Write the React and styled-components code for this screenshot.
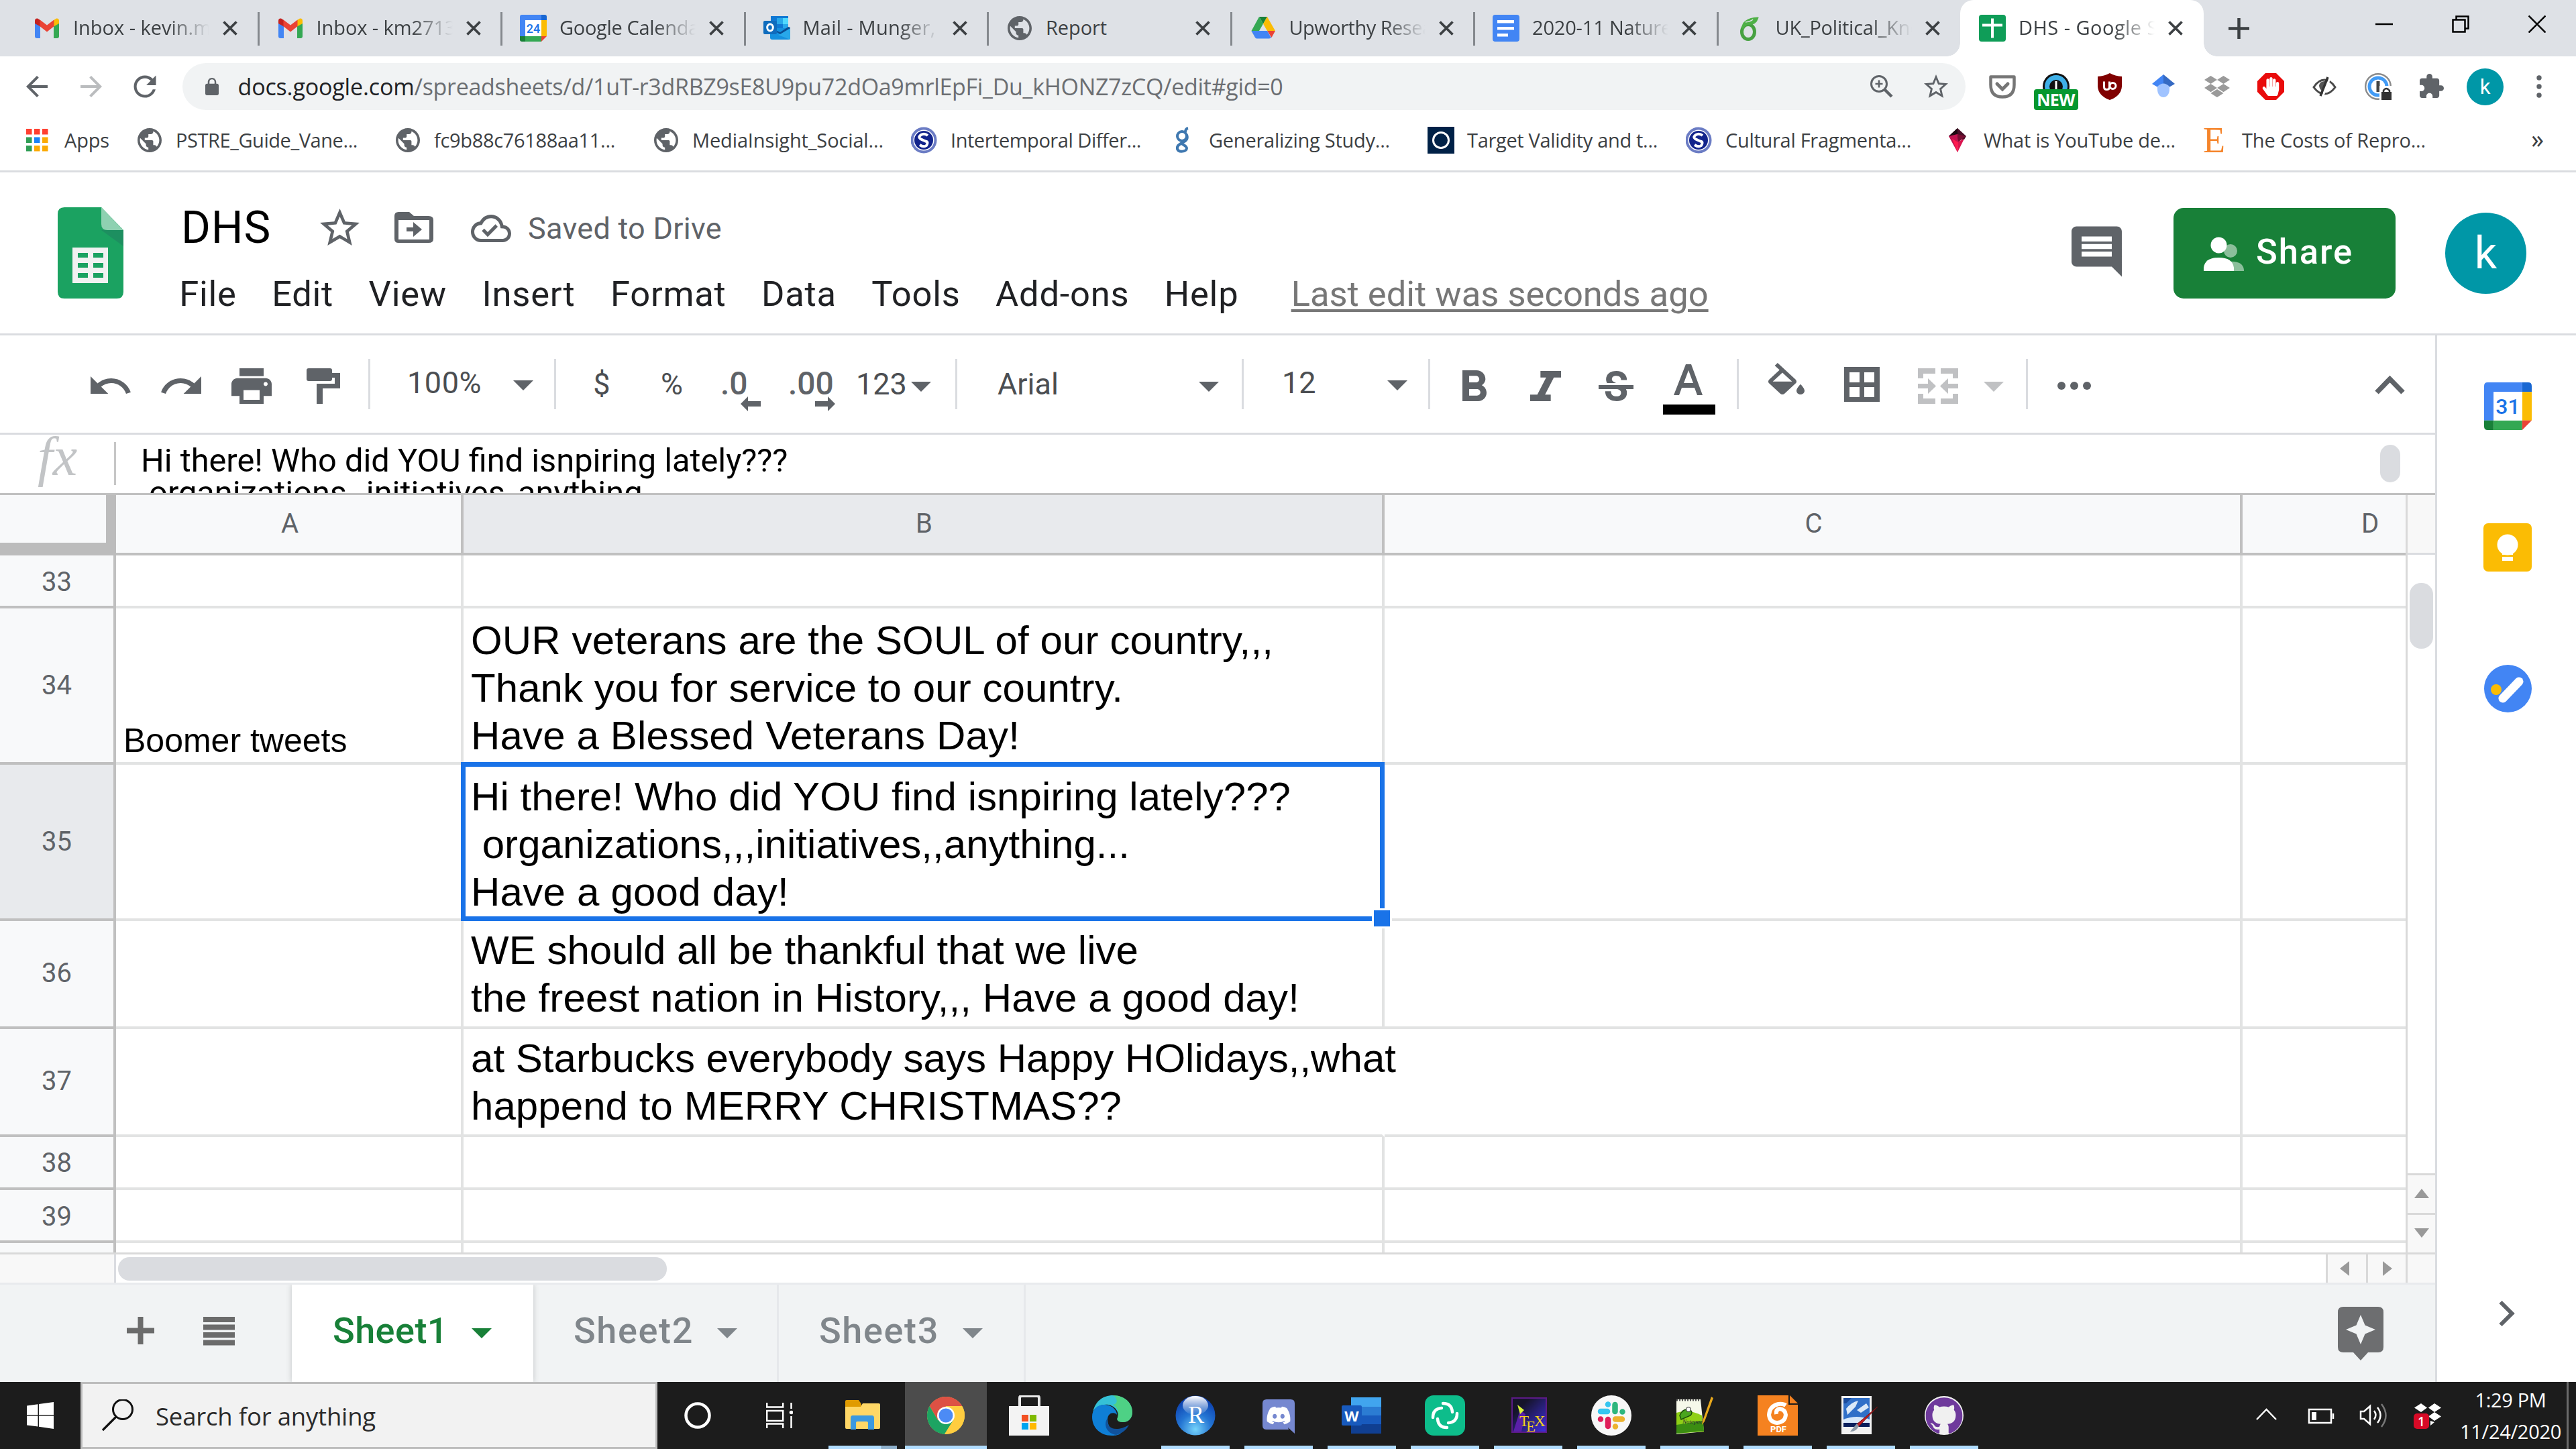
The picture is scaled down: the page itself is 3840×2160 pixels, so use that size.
import React, { useLayoutEffect, useRef, useState } from 'react';
import styled, { createGlobalStyle, css } from 'styled-components';
import { FaDiscord, FaDropbox, FaHandPaper } from 'react-icons/fa';
import { SiGithub } from 'react-icons/si';

const GlobalStyle = createGlobalStyle`
  *, *::before, *::after { box-sizing: border-box; }
  html, body { margin: 0; padding: 0; background: #fff; }
  svg { display: block; flex: none; }
`;

const UI = '"Open Sans", "Noto Sans", sans-serif';
const ROBOTO = 'Roboto, "Liberation Sans", sans-serif';
const ARIAL = '"Liberation Sans", Arial, sans-serif';
const GRAY = '#5f6368';

/* ---------- shared pieces ---------- */

const Span = styled.span`
  display: inline-block;
  flex: none;
  white-space: pre;
`;

/* Text tracked so that it fills the given width. */
function Fit({ width, children, className }) {
  const ref = useRef(null);
  const [spacing, setSpacing] = useState(null);
  useLayoutEffect(() => {
    if (spacing === null && ref.current) {
      const natural = ref.current.getBoundingClientRect().width;
      setSpacing((width - natural) / String(children).length);
    }
  }, [spacing, width, children]);
  return (
    <Span ref={ref} className={className} style={spacing === null ? undefined : { letterSpacing: `${spacing}px` }}>
      {children}
    </Span>
  );
}

/* A drawing whose box is "x y width height"; one unit is one pixel. */
function Pic({ box, children, ...rest }) {
  const [, , w, h] = box.split(' ');
  return (
    <svg width={w} height={h} viewBox={box} {...rest}>
      {children}
    </svg>
  );
}

/* Stretches path d with bounds `from` [x0,y0,x1,y1] into bounds `to`. */
function Shape({ d, from, to, fill = GRAY, ...rest }) {
  const sx = (to[2] - to[0]) / (from[2] - from[0]);
  const sy = (to[3] - to[1]) / (from[3] - from[1]);
  return (
    <path
      d={d}
      fill={fill}
      fillRule="evenodd"
      transform={`translate(${to[0] - from[0] * sx} ${to[1] - from[1] * sy}) scale(${sx} ${sy})`}
      {...rest}
    />
  );
}

const P = {
  undo: 'M12.5 8c-2.65 0-5.05.99-6.9 2.6L2 7v9h9l-3.62-3.62c1.39-1.16 3.16-1.88 5.12-1.88 3.54 0 6.55 2.31 7.6 5.5l2.37-.78C21.08 11.03 17.15 8 12.5 8z',
  redo: 'M18.4 10.6C16.55 8.99 14.15 8 11.5 8c-4.65 0-8.58 3.03-9.96 7.22L3.9 16c1.05-3.19 4.05-5.5 7.6-5.5 1.95 0 3.73.72 5.12 1.88L13 16h9V7l-3.6 3.6z',
  print: 'M19 8H5c-1.66 0-3 1.34-3 3v6h4v4h12v-4h4v-6c0-1.66-1.34-3-3-3zm-3 11H8v-5h8v5zm3-7c-.55 0-1-.45-1-1s.45-1 1-1 1 .45 1 1-.45 1-1 1zm-1-9H6v4h12V3z',
  star: 'M22 9.24l-7.19-.62L12 2 9.19 8.63 2 9.24l5.46 4.73L5.82 21 12 17.27 18.18 21l-1.63-7.03L22 9.24zM12 15.4l-3.76 2.27 1-4.28-3.32-2.88 4.38-.38L12 6.1l1.71 4.04 4.38.38-3.32 2.88 1 4.28L12 15.4z',
  cloud: 'M19.35 10.04C18.67 6.59 15.64 4 12 4 9.11 4 6.6 5.64 5.35 8.04 2.34 8.36 0 10.91 0 14c0 3.31 2.69 6 6 6h13c2.76 0 5-2.24 5-5 0-2.64-2.05-4.78-4.65-4.96zM19 18H6c-2.21 0-4-1.79-4-4 0-2.05 1.53-3.76 3.56-3.97l1.07-.11.5-.95C8.08 7.14 9.94 6 12 6c2.62 0 4.88 1.86 5.39 4.43l.3 1.5 1.53.11c1.56.1 2.78 1.41 2.78 2.96 0 1.65-1.35 3-3 3zm-9-3.82l-2.09-2.09L6.5 13.5 10 17l6.01-6.01-1.41-1.41z',
  comment: 'M21.99 4c0-1.1-.89-2-1.99-2H4c-1.1 0-2 .9-2 2v12c0 1.1.9 2 2 2h14l4 4-.01-18zM18 14H6v-2h12v2zm0-3H6V9h12v2zm0-3H6V6h12v2z',
  bold: 'M15.6 10.79c.97-.67 1.65-1.77 1.65-2.79 0-2.26-1.75-4-4-4H7v14h7.04c2.09 0 3.71-1.7 3.71-3.79 0-1.52-.86-2.82-2.15-3.42zM10 6.5h3c.83 0 1.5.67 1.5 1.5s-.67 1.5-1.5 1.5h-3v-3zm3.5 9H10v-3h3.5c.83 0 1.5.67 1.5 1.5s-.67 1.5-1.5 1.5z',
  italic: 'M10 4v3h2.21l-3.42 8H6v3h8v-3h-2.21l3.42-8H18V4z',
  strike: 'M7.24 8.75c-.26-.48-.39-1.03-.39-1.67 0-.61.13-1.16.4-1.67.26-.5.63-.93 1.11-1.29.48-.35 1.05-.63 1.7-.83.66-.19 1.39-.29 2.18-.29.81 0 1.54.11 2.21.34.66.22 1.23.54 1.69.94.47.4.83.88 1.08 1.43s.38 1.15.38 1.81h-3.01c0-.31-.05-.59-.15-.85-.09-.27-.24-.49-.44-.68-.2-.19-.45-.33-.75-.44-.3-.1-.66-.16-1.06-.16-.39 0-.74.04-1.03.13s-.53.21-.72.36c-.19.16-.34.34-.44.55-.1.21-.15.43-.15.66 0 .48.25.88.74 1.21.38.25.77.48 1.41.7H7.39c-.05-.08-.11-.17-.15-.25zM21 12v-2H3v2h9.62c.18.07.4.14.55.2.37.17.66.34.87.51s.35.36.43.57c.07.2.11.43.11.69 0 .23-.05.45-.14.66-.09.2-.23.38-.42.53-.19.15-.42.26-.71.35-.29.08-.63.13-1.01.13-.43 0-.83-.04-1.18-.13s-.66-.23-.91-.42c-.25-.19-.45-.44-.59-.75s-.25-.76-.25-1.21H6.4c0 .55.08 1.13.24 1.58s.37.85.65 1.21c.28.35.6.66.98.92.37.26.78.48 1.22.65.44.17.9.3 1.38.39.48.08.96.13 1.44.13.8 0 1.53-.09 2.18-.28s1.21-.45 1.67-.79c.46-.34.82-.77 1.07-1.27s.38-1.07.38-1.71c0-.6-.1-1.14-.31-1.61-.05-.11-.11-.23-.17-.33H21z',
  fill: 'M16.56 8.94L7.62 0 6.21 1.41l2.38 2.38-5.15 5.15c-.59.59-.59 1.54 0 2.12l5.5 5.5c.29.29.68.44 1.06.44s.77-.15 1.06-.44l5.5-5.5c.59-.58.59-1.53 0-2.12zM5.21 10L10 5.21 14.79 10H5.21zM19 11.5s-2 2.17-2 3.5c0 1.1.9 2 2 2s2-.9 2-2c0-1.33-2-3.5-2-3.5z',
  puzzle: 'M20.5 11H19V7c0-1.1-.9-2-2-2h-4V3.5C13 2.12 11.88 1 10.5 1S8 2.12 8 3.5V5H4c-1.1 0-1.99.9-1.99 2v3.8H3.5c1.49 0 2.7 1.21 2.7 2.7s-1.21 2.7-2.7 2.7H2V20c0 1.1.9 2 2 2h3.8v-1.5c0-1.49 1.21-2.7 2.7-2.7 1.49 0 2.7 1.21 2.7 2.7V22H17c1.1 0 2-.9 2-2v-4h1.5c1.38 0 2.5-1.12 2.5-2.5S21.88 11 20.5 11z',
  lock: 'M18 8h-1V6c0-2.76-2.24-5-5-5S7 3.24 7 6v2H6c-1.1 0-2 .9-2 2v10c0 1.1.9 2 2 2h12c1.1 0 2-.9 2-2V10c0-1.1-.9-2-2-2zM15 8H9V6c0-1.71 1.29-3.1 3-3.1s3.1 1.39 3.1 3.1z',
  reload: 'M17.65 6.35C16.2 4.9 14.21 4 12 4c-4.42 0-7.99 3.58-7.99 8s3.57 8 7.99 8c3.73 0 6.84-2.55 7.73-6h-2.08c-.82 2.33-3.04 4-5.65 4-3.31 0-6-2.69-6-6s2.69-6 6-6c1.66 0 3.14.69 4.22 1.78L13 11h7V4l-2.35 2.35z',
  back: 'M20 11H7.83l5.59-5.59L12 4l-8 8 8 8 1.41-1.41L7.83 13H20v-2z',
  forward: 'M4 11h12.17l-5.59-5.59L12 4l8 8-8 8-1.41-1.41L16.17 13H4v-2z',
  globe: 'M12 2C6.48 2 2 6.48 2 12s4.48 10 10 10 10-4.48 10-10S17.52 2 12 2zm-1 17.93c-3.95-.49-7-3.85-7-7.93 0-.62.08-1.21.21-1.79L9 15v1c0 1.1.9 2 2 2v1.93zm6.9-2.54c-.26-.81-1-1.39-1.9-1.39h-1v-3c0-.55-.45-1-1-1H8v-2h2c.55 0 1-.45 1-1V7h2c1.1 0 2-.9 2-2v-.41c2.93 1.19 5 4.06 5 7.41 0 2.08-.8 3.97-2.1 5.39z',
};

const SQ = [2, 2, 22, 22];

/* ---------- favicons (40 x 40) ---------- */

const Fav = ({ children }) => <Pic box="0 0 40 40">{children}</Pic>;

const Gmail = () => (
  <Fav>
    <path d="M2 10v22q0 3 3 3h5V17z" fill="#4285f4" />
    <path d="M38 10v22q0 3-3 3h-5V17z" fill="#34a853" />
    <path d="M2 9q0-4 4-3.500l4 2.500v9.500L2 13z" fill="#c5221f" />
    <path d="M38 9q0-4-4-3.500l-4 2.500v9.500l8-4.500z" fill="#fbbc04" />
    <path d="M9.500 7.500L20 15.500l10.500-8v9.800L20 25.500 9.500 17.300z" fill="#ea4335" />
  </Fav>
);

const Calendar = ({ day, size = 40 }) => (
  <svg width={size} height={size} viewBox="0 0 40 40">
    <path d="M3 0h29v8H8v24H0V3q0-3 3-3z" fill="#4285f4" />
    <path d="M32 0h5q3 0 3 3v5h-8z" fill="#1967d2" />
    <path d="M32 8h8v24h-8z" fill="#fbbc04" />
    <path d="M0 32h8v8H3q-3 0-3-3z" fill="#188038" />
    <path d="M8 32h24v8H8z" fill="#34a853" />
    <path d="M32 32h8l-8 8z" fill="#ea4335" />
    <path d="M8 8h24v24H8z" fill="#fff" />
    <text x="20" y="26.500" fontFamily="Roboto, sans-serif" fontSize="18" fontWeight="500" fill="#1a73e8" textAnchor="middle">
      {day}
    </text>
  </svg>
);

const Outlook = () => (
  <Fav>
    <path d="M11 2h26v24H11z" fill="#0f78d4" />
    <path d="M20 5h9v9h-9z" fill="#28a8ea" />
    <path d="M29 5h8v9h-8z" fill="#50d9ff" />
    <path d="M29 14h8v8h-8z" fill="#28a8ea" />
    <path d="M10 20l30 0v14q0 3-3 3H13q-3 0-3-3z" fill="#1490df" />
    <path d="M40 20L22 30l18 7z" fill="#28a8ea" />
    <path d="M10 20l15 9 15-9v-1l-3-1-12 8z" fill="#0a4e94" />
    <rect x="0" y="9" width="20" height="20" rx="2" fill="#0f6cbd" />
    <ellipse cx="10" cy="19" rx="4.300" ry="5" fill="none" stroke="#fff" strokeWidth="3" />
  </Fav>
);

const Globe = () => (
  <Fav>
    <Shape d={P.globe} from={SQ} to={[2, 2, 38, 38]} />
  </Fav>
);

const Drive = () => (
  <Fav>
    <path d="M14 3h12l-6 10.500z" fill="#188038" />
    <path d="M14 3l6 10.500L8.500 33.500 2.500 24z" fill="#34a853" />
    <path d="M26 3l12 21H26L20 13.500z" fill="#fbbc04" />
    <path d="M38 24l-5.500 10L26 24z" fill="#ea4335" />
    <path d="M2.500 24H26l6 10.500-3 1H11q-2 0-3-1.500z" fill="#4285f4" />
  </Fav>
);

const Docs = () => (
  <Fav>
    <rect width="40" height="40" rx="4" fill="#4285f4" />
    <path d="M7 8h25v4.500H7zM7 18h25v4.500H7zM7 28h16v4.500H7z" fill="#fff" />
  </Fav>
);

const Overleaf = () => (
  <Fav>
    <ellipse cx="18" cy="25.500" rx="9.500" ry="11" fill="none" stroke="#47a141" strokeWidth="5" />
    <path d="M8 20Q9 5 32 3.500q2.500 0 1 2Q30 16 17 15q-5 2-6 7z" fill="#4fb047" />
    <path d="M14 11q8-1 11-4" stroke="#dee1e6" strokeWidth="1.500" fill="none" />
  </Fav>
);

const SheetsFav = () => (
  <Fav>
    <rect width="40" height="40" rx="4" fill="#0f9d58" />
    <path d="M18 5.500h4v8h13v4H22v17h-4v-17H5v-4h13z" fill="#fff" />
  </Fav>
);

const SSeal = () => (
  <Fav>
    <circle cx="19" cy="20" r="17.500" fill="#fff" stroke="#6b7cc4" strokeWidth="4" />
    <circle cx="19" cy="20" r="14" fill="#12248c" />
    <path d="M25 13q-5-4-10-1t-1 6q6 3 9 4t0 6q-4 3-10-1" fill="none" stroke="#fff" strokeWidth="4" />
  </Fav>
);

const GLogo = () => (
  <Fav>
    <circle cx="19" cy="14" r="7" fill="none" stroke="#3f78b0" strokeWidth="4" />
    <path d="M24 8q0-5 4-6" fill="none" stroke="#3f78b0" strokeWidth="4" />
    <path d="M26 12q3 8-6 11c-7 2 6 4 6 9s-12 7-14 1q-1-6 8-9" fill="none" stroke="#3f78b0" strokeWidth="4" />
  </Fav>
);

const Oxford = () => (
  <Fav>
    <rect width="40" height="40" fill="#002147" />
    <circle cx="20" cy="20" r="11.500" fill="none" stroke="#fff" strokeWidth="3" />
  </Fav>
);

const Kite = () => (
  <Fav>
    <path d="M20 2L7 14l5 6 18-1 3-5z" fill="#4a0f28" />
    <path d="M20 2l-13 12 13-3z" fill="#1d0a12" />
    <path d="M7 14l13-3 1 10-1 17z" fill="#c1124f" />
    <path d="M20 11l12 3-11 9z" fill="#7a0d32" />
    <path d="M12 18l9 5-1 15z" fill="#ff1a4f" />
    <path d="M21 22l9-4-10 20z" fill="#d9154f" />
  </Fav>
);

const EText = styled.span`
  width: 40px;
  flex: none;
  font: 54px/40px "Liberation Serif", serif;
  text-align: left;
  padding-left: 1px;
  color: #f5842a;
`;

/* ---------- browser tab strip ---------- */

const Screen = styled.div`
  width: 3840px;
  height: 2160px;
  display: flex;
  flex-direction: column;
  background: #fff;
  overflow: hidden;
`;

const TabStrip = styled.div`
  display: flex;
  height: 84px;
  flex: none;
  padding-left: 22px;
  background: #dee1e6;
`;

const BrowserTab = styled.div`
  position: relative;
  display: flex;
  align-items: center;
  width: 362.5px;
  flex: none;
  padding-left: 28px;
  ${(p) =>
    p.$active &&
    css`
      background: #fff;
      border-radius: 20px 20px 0 0;
      &::before,
      &::after {
        content: '';
        position: absolute;
        bottom: 0;
        width: 20px;
        height: 20px;
      }
      &::before {
        left: -20px;
        background: radial-gradient(circle at 0 0, transparent 19.5px, #fff 20px);
      }
      &::after {
        right: -20px;
        background: radial-gradient(circle at 100% 0, transparent 19.5px, #fff 20px);
      }
    `}
`;

const TabTitle = styled.div`
  width: 203px;
  height: 84px;
  margin: 0 19px 0 19px;
  overflow: hidden;
  font: 29px/82px ${UI};
  color: #3c4043;
  white-space: nowrap;
  ${(p) => p.$fade && 'mask-image: linear-gradient(90deg, #000 70%, transparent 100%);'}
`;

const TabRule = styled.div`
  width: 3px;
  height: 50px;
  margin: 2px -2px 0 auto;
  background: #84888d;
`;

const WindowButtons = styled.div`
  display: flex;
  align-items: center;
  margin-left: auto;
  padding: 0 45px 13px 0;
  gap: 88px;
`;

const NewTab = styled.div`
  display: flex;
  align-items: center;
  margin-left: 37px;
`;

const CloseX = () => (
  <Pic box="0 0 24 24">
    <path d="M2.500 2.500l19 19M21.500 2.500l-19 19" stroke="#3c4043" strokeWidth="3.800" />
  </Pic>
);

const TABS = [
  { icon: <Gmail />, text: 'Inbox - kevin.m', w: 206, fade: true },
  { icon: <Gmail />, text: 'Inbox - km2713', w: 208, fade: true },
  { icon: <Calendar day="24" />, text: 'Google Calenda', w: 208, fade: true },
  { icon: <Outlook />, text: 'Mail - Munger,', w: 198, fade: true },
  { icon: <Globe />, text: 'Report', w: 91 },
  { icon: <Drive />, text: 'Upworthy Resea', w: 214, fade: true },
  { icon: <Docs />, text: '2020-11 Nature', w: 208, fade: true },
  { icon: <Overleaf />, text: 'UK_Political_Kno', w: 218, fade: true, last: true },
  { icon: <SheetsFav />, text: 'DHS - Google S', w: 208, fade: true, active: true },
];

/* ---------- address bar ---------- */

const NavBar = styled.div`
  display: flex;
  align-items: center;
  height: 90px;
  flex: none;
  padding: 0 15px;
`;

const NavSlot = styled.div`
  display: flex;
  position: relative;
  align-items: center;
  justify-content: center;
  width: 80.5px;
  flex: none;
`;

const ExtSlot = styled(NavSlot)`
  width: 80px;
`;

const UrlPill = styled.div`
  display: flex;
  align-items: center;
  width: 2658px;
  height: 70px;
  margin: 0 15px;
  padding: 0 25px 0 33px;
  border-radius: 35px;
  background: #f1f3f4;
  font: 34px/70px ${UI};
  color: #6b6e72;
`;

const UrlHost = styled.span`
  display: inline-flex;
  margin-left: 28px;
  color: #202124;
`;

const PillIcons = styled.div`
  display: flex;
  align-items: center;
  gap: 45px;
  margin-left: auto;
`;

const NewBadge = styled.div`
  position: absolute;
  left: 7px;
  top: 24px;
  width: 66px;
  height: 31px;
  border-radius: 4px;
  background: #06972f;
  color: #fff;
  font: 700 25px/31px ${UI};
  letter-spacing: -0.6px;
  text-align: center;
`;

const Avatar = styled.div`
  display: flex;
  align-items: center;
  justify-content: center;
  width: ${(p) => p.$size}px;
  height: ${(p) => p.$size}px;
  flex: none;
  border-radius: 50%;
  background: #0097a7;
  color: #fff;
  font: ${(p) => p.$font}px/1 ${ROBOTO};
`;

const AddressBar = () => (
  <NavBar>
    <NavSlot>
      <Pic box="0 0 34 34"><Shape d={P.back} from={[4, 4, 20, 20]} to={[1, 1, 33, 33]} /></Pic>
    </NavSlot>
    <NavSlot>
      <Pic box="0 0 34 34"><Shape d={P.forward} from={[4, 4, 20, 20]} to={[1, 1, 33, 33]} fill="#babcbe" /></Pic>
    </NavSlot>
    <NavSlot>
      <Pic box="0 0 34 34"><Shape d={P.reload} from={[4, 4, 20, 20]} to={[0.5, 0.5, 33.5, 33.5]} /></Pic>
    </NavSlot>
    <UrlPill>
      <Pic box="0 0 22 28"><Shape d={P.lock} from={[4, 1, 20, 22]} to={[1, 1, 21, 27]} /></Pic>
      <UrlHost><Fit width={263}>docs.google.com</Fit></UrlHost>
      <Fit width={1295}>/spreadsheets/d/1uT-r3dRBZ9sE8U9pu72dOa9mrlEpFi_Du_kHONZ7zCQ/edit#gid=0</Fit>
      <PillIcons>
        <Pic box="0 0 34 34">
          <circle cx="13" cy="13" r="11.500" fill="none" stroke={GRAY} strokeWidth="3" />
          <path d="M21 21l11 11" stroke={GRAY} strokeWidth="4.500" />
          <path d="M13 7.500v11M7.500 13h11" stroke={GRAY} strokeWidth="2.600" />
        </Pic>
        <Pic box="0 0 38 38"><Shape d={P.star} from={[2, 2, 22, 21]} to={[1, 1, 37, 36]} /></Pic>
      </PillIcons>
    </UrlPill>
    <ExtSlot>
      <Pic box="0 0 40 38">
        <path d="M2.500 4.500h35v12q0 18-17.500 18T2.500 16.500z" fill="none" stroke="#767676" strokeWidth="4.500" strokeLinejoin="round" />
        <path d="M12 15l8 8 8-8" fill="none" stroke="#767676" strokeWidth="5" strokeLinecap="round" />
      </Pic>
    </ExtSlot>
    <ExtSlot>
      <Pic box="0 0 40 40">
        <circle cx="20" cy="20" r="20" fill="#111" />
        <circle cx="20" cy="20" r="13.500" fill="none" stroke="#3fb0e8" strokeWidth="7" />
        <path d="M20 12v12" stroke="#fff" strokeWidth="3" />
      </Pic>
      <NewBadge>NEW</NewBadge>
    </ExtSlot>
    <ExtSlot>
      <Pic box="0 0 36 40">
        <path d="M18 0q8 4.500 18 5v15Q35 34 18 40 1 34 0 20V5q10-.5 18-5z" fill="#800000" />
        <path d="M9.500 12.500v8q0 4 4 4t4-4v-8" fill="none" stroke="#fff" strokeWidth="3" />
        <circle cx="22.500" cy="19" r="4.500" fill="none" stroke="#fff" strokeWidth="3" />
      </Pic>
    </ExtSlot>
    <ExtSlot>
      <Pic box="0 0 34 38">
        <path d="M17 1v24L0 15z" fill="#4285f4" />
        <path d="M17 1v24l17-10z" fill="#356ac3" />
        <path d="M8 19q9-9 18 0v4c0 16-18 16-18 0z" fill="#a0c3ff" />
      </Pic>
    </ExtSlot>
    <ExtSlot><FaDropbox size={38} color="#9a9a9a" /></ExtSlot>
    <ExtSlot>
      <Pic box="0 0 40 40">
        <path d="M12 0h16l12 12v16L28 40H12L0 28V12z" fill="#e90c0c" />
        <FaHandPaper size={28} x="6" y="6" color="#fff" />
      </Pic>
    </ExtSlot>
    <ExtSlot>
      <Pic box="0 0 36 30">
        <path d="M2 16Q9 5 18 5t16 11Q27 26 18 26T2 16z" fill="none" stroke="#4a4a4a" strokeWidth="3" />
        <path d="M10 13Q12 6 20 7l-6 14q-4-3-4-8z" fill="#555" />
        <path d="M26.500 1.500L15.500 29.500" stroke="#fff" strokeWidth="3" />
        <path d="M23 1L12 29" stroke="#333" strokeWidth="3.500" />
      </Pic>
    </ExtSlot>
    <ExtSlot>
      <Pic box="0 0 40 40">
        <circle cx="20" cy="20" r="18.800" fill="none" stroke="#8a8a8a" strokeWidth="2.400" />
        <circle cx="20" cy="20" r="13" fill="none" stroke="#429bf5" strokeWidth="5" />
        <path d="M17.500 12h5v16h-5z" fill="#444" />
        <path d="M22 19h18v21H22z" fill="#fff" />
        <path d="M25 28h15v12H25z" fill="#333" />
        <path d="M28 29v-3q4-6 9 0v3" fill="none" stroke="#333" strokeWidth="2.500" />
      </Pic>
    </ExtSlot>
    <ExtSlot><Pic box="0 0 38 38"><Shape d={P.puzzle} from={[2, 1, 23, 22]} to={[1, 0, 37, 36]} /></Pic></ExtSlot>
    <ExtSlot><Avatar $size={55} $font={31}>k</Avatar></ExtSlot>
    <ExtSlot>
      <Pic box="0 0 10 36">
        <circle cx="5" cy="5" r="3.700" fill={GRAY} />
        <circle cx="5" cy="18" r="3.700" fill={GRAY} />
        <circle cx="5" cy="31" r="3.700" fill={GRAY} />
      </Pic>
    </ExtSlot>
  </NavBar>
);

/* ---------- bookmarks ---------- */

const BookmarkBar = styled.div`
  display: flex;
  align-items: center;
  height: 83px;
  flex: none;
  padding: 0 0 10px 39px;
  border-bottom: 3px solid #dadce0;
  font: 29px/70px ${UI};
  color: #3c4043;
`;

const AppsLink = styled.div`
  display: flex;
  align-items: center;
  gap: 24px;
  width: 164px;
  flex: none;
`;

const Bookmark = styled.div`
  display: flex;
  align-items: center;
  gap: 19px;
  width: 385px;
  flex: none;
`;

const More = styled.div`
  margin-left: auto;
  padding: 0 48px 6px 0;
  font-size: 38px;
`;

const BOOKMARKS = [
  { icon: <Globe />, text: 'PSTRE_Guide_Vane...', w: 271 },
  { icon: <Globe />, text: 'fc9b88c76188aa11...', w: 270 },
  { icon: <Globe />, text: 'MediaInsight_Social...', w: 285 },
  { icon: <SSeal />, text: 'Intertemporal Differ...', w: 284 },
  { icon: <GLogo />, text: 'Generalizing Study...', w: 270 },
  { icon: <Oxford />, text: 'Target Validity and t...', w: 284 },
  { icon: <SSeal />, text: 'Cultural Fragmenta...', w: 277 },
  { icon: <Kite />, text: 'What is YouTube de...', w: 286 },
  { icon: <EText>E</EText>, text: 'The Costs of Repro...', w: 274 },
];

const APP_COLORS = ['#ff4031', '#ff4031', '#ff4031', '#2f9e55', '#1a82f7', '#fbaa05', '#2f9e55', '#fbaa05', '#fbaa05'];

/* ---------- document header ---------- */

const DocHeader = styled.div`
  display: flex;
  height: 243px;
  flex: none;
  padding: 43px 74px 0 86px;
  border-bottom: 3px solid #dadce0;
  font-family: ${ROBOTO};
`;

const LogoBox = styled.div`
  width: 155px;
  padding-top: 9px;
  flex: none;
`;

const TitleRow = styled.div`
  display: flex;
  align-items: center;
  height: 80px;
  padding-left: 29px;
`;

const DocName = styled.div`
  width: 204px;
  padding-bottom: 3px;
  font-size: 67px;
  line-height: 76px;
  color: #000;
`;

const SavedNote = styled.div`
  margin-left: 25px;
  font-size: 45px;
  color: ${GRAY};
`;

const MenuRow = styled.div`
  display: flex;
  align-items: center;
  height: 66px;
  margin-top: 25px;
  font-size: 52.5px;
  letter-spacing: 0.75px;
  color: #202124;
`;

const MenuItem = styled.div`
  padding: 0 26.25px;
`;

const LastEdit = styled.div`
  margin-left: 52px;
  color: #777;
  letter-spacing: 0;
  & > span {
    text-decoration: underline;
    text-decoration-thickness: 4px;
    text-underline-offset: 5px;
  }
`;

const HeaderActions = styled.div`
  display: flex;
  align-items: center;
  height: 155px;
  margin-left: auto;
`;

const ShareButton = styled.div`
  display: flex;
  align-items: center;
  width: 331px;
  height: 135px;
  margin: 0 74px 0 76px;
  padding-left: 45px;
  gap: 18px;
  border-radius: 15px;
  background: #188038;
  color: #fff;
  font: 500 52.5px/131px ${ROBOTO};
  & > span { height: 135px; }
`;

const Header = () => (
  <DocHeader>
    <LogoBox>
      <Pic box="0 0 98 136">
        <path d="M10 0h55l33 34v92q0 10-10 10H10q-10 0-10-10V10Q0 0 10 0z" fill="#1ba261" />
        <path d="M65 34h33v24z" fill="#1d8f60" />
        <path d="M65 0l33 34H74q-9 0-9-9z" fill="#8ed1b1" />
        <path fillRule="evenodd" fill="#f1f1f1" d="M22 60h53v53H22zM30 68v7h15v-7zM53 68v7h15v-7zM30 83v7h15v-7zM53 83v7h15v-7zM30 98v7h15v-7zM53 98v7h15v-7z" />
      </Pic>
    </LogoBox>
    <div>
      <TitleRow>
        <DocName><Fit width={134}>DHS</Fit></DocName>
        <Pic box="474 302 288 76">
          <Shape d={P.star} from={[2, 2, 22, 21]} to={[477, 311, 536, 366]} />
          <path fillRule="evenodd" fill={GRAY} d="M594 316h16l7 6h22q7 0 7 6v28q0 6-7 6h-45q-6 0-6-6v-34q0-6 6-6zM594 328v29h46v-29z" />
          <path d="M606 339h10v-8l13 11-13 11v-8h-10z" fill={GRAY} />
          <Shape d={P.cloud} from={[0, 4, 24, 20]} to={[702, 320, 762, 361]} />
        </Pic>
        <SavedNote><Fit width={289}>Saved to Drive</Fit></SavedNote>
      </TitleRow>
      <MenuRow>
        {['File', 'Edit', 'View', 'Insert', 'Format', 'Data', 'Tools', 'Add-ons', 'Help'].map((m) => (
          <MenuItem key={m}>{m}</MenuItem>
        ))}
        <LastEdit><Fit width={622}>Last edit was seconds ago</Fit></LastEdit>
      </MenuRow>
    </div>
    <HeaderActions>
      <Pic box="0 0 76 82"><Shape d={P.comment} from={SQ} to={[0, 0.5, 75, 75.5]} /></Pic>
      <ShareButton>
        <Pic box="0 0 60 56">
          <circle cx="40" cy="24" r="10" fill="#8bbf9b" />
          <path d="M36 40q24-2 24 14H44z" fill="#8bbf9b" />
          <circle cx="22.500" cy="15.500" r="12" fill="#fff" />
          <path d="M0 54v-5q2-15 22.500-15T45 49v5z" fill="#fff" />
        </Pic>
        <Fit width={145}>Share</Fit>
      </ShareButton>
      <Avatar $size={121} $font={66}>k</Avatar>
    </HeaderActions>
  </DocHeader>
);

/* ---------- toolbar ---------- */

const Work = styled.div`
  display: flex;
  flex: none;
  height: 1560px;
`;

const Main = styled.div`
  display: flex;
  flex-direction: column;
  width: 3633px;
  flex: none;
  border-right: 3px solid #dadce0;
`;

const Toolbar = styled.div`
  display: flex;
  align-items: center;
  height: 148px;
  flex: none;
  padding-left: 112px;
  border-bottom: 3px solid #dadce0;
  font: 45px/90px ${ROBOTO};
  color: #4b4e52;
`;

const Tool = styled.div`
  display: flex;
  align-items: center;
  justify-content: ${(p) => (p.$pad ? 'flex-start' : 'center')};
  width: ${(p) => p.$w}px;
  flex: none;
  padding-left: ${(p) => p.$pad || 0}px;
  margin-top: ${(p) => p.$dy || 0}px;
`;

const Rule = styled.div`
  display: flex;
  justify-content: center;
  width: ${(p) => p.$w}px;
  flex: none;
  &::after {
    content: '';
    width: 3px;
    height: 75px;
    background: #dadce0;
  }
`;

const Collapse = styled.div`
  display: flex;
  justify-content: center;
  width: 136px;
  margin-left: auto;
`;

const Caret = ({ color = GRAY, dy = 0 }) => (
  <Pic box="0 0 30 60">
    <path d={`M0 ${25 + dy}h30l-15 15z`} fill={color} />
  </Pic>
);

const Tools = () => (
  <Toolbar>
    <Tool $w={106}><Pic box="135 530 60 85"><Shape d={P.undo} from={[2, 7, 22.5, 16]} to={[135, 561, 195, 587]} /></Pic></Tool>
    <Tool $w={104}><Pic box="240 530 60 85"><Shape d={P.redo} from={[1.5, 7, 22, 16]} to={[240, 561, 300, 587]} /></Pic></Tool>
    <Tool $w={106}><Pic box="345 530 60 85"><Shape d={P.print} from={[2, 3, 22, 21]} to={[345, 549, 405, 602]} /></Pic></Tool>
    <Tool $w={108}>
      <Pic box="457 530 50 85">
        <rect x="457" y="549" width="38" height="19" rx="3" fill={GRAY} />
        <path d="M494 556h13v23h-26v23h-9v-30h27v-9h-5z" fill={GRAY} />
      </Pic>
    </Tool>
    <Rule $w={28} />
    <Tool $w={197} $pad={43} $dy={-3}><Fit width={111}>100%</Fit></Tool>
    <Tool $w={38}><Caret dy={-1} /></Tool>
    <Rule $w={56} />
    <Tool $w={84}>$</Tool>
    <Tool $w={125}>%</Tool>
    <Tool $w={96}>
      <Pic box="1064 530 96 90">
        <text x="1074" y="590" fontSize="48" fontFamily="Roboto, sans-serif" fontWeight="500" fill={GRAY}>.0</text>
        <path d="M1104 604l11-11v7h19v8h-19v7z" fill={GRAY} />
      </Pic>
    </Tool>
    <Tool $w={102}>
      <Pic box="1160 530 102 90">
        <text x="1175" y="590" fontSize="48" fontFamily="Roboto, sans-serif" fontWeight="500" fill={GRAY}>.00</text>
        <path d="M1245 604l-11-11v7h-19v8h19v7z" fill={GRAY} />
      </Pic>
    </Tool>
    <Tool $w={92} $pad={14} $dy={1}>123</Tool>
    <Tool $w={38}><Caret dy={1} /></Tool>
    <Rule $w={66} />
    <Tool $w={325} $pad={29} $dy={1}>Arial</Tool>
    <Tool $w={38}><Caret dy={1} /></Tool>
    <Rule $w={62} />
    <Tool $w={171} $pad={28} $dy={-3}>12</Tool>
    <Tool $w={58}><Caret dy={-1} /></Tool>
    <Rule $w={36} />
    <Tool $w={100}><Pic box="2180 530 36 85"><Shape d={P.bold} from={[7, 4, 17.75, 18]} to={[2180, 552, 2216, 598]} /></Pic></Tool>
    <Tool $w={112}><Pic box="2281 530 46 85"><Shape d={P.italic} from={[6, 4, 18, 18]} to={[2281, 553, 2327, 598]} /></Pic></Tool>
    <Tool $w={98}><Pic box="2383 530 52 85"><Shape d={P.strike} from={[3, 3, 21, 18.7]} to={[2383, 553, 2435, 600]} /></Pic></Tool>
    <Tool $w={120}>
      <Pic box="2479 527 78 92">
        <path fillRule="evenodd" fill={GRAY} d="M2513 543h8l17 46h-8l-4-11h-19l-4 11h-8zM2517 552l-7 19h14z" />
        <path d="M2479 603h78v15h-78z" fill="#000" />
      </Pic>
    </Tool>
    <Rule $w={24} />
    <Tool $w={122}><Pic box="2636 530 54 85"><Shape d={P.fill} from={[3, 0, 21, 17]} to={[2636, 541, 2690, 588]} /></Pic></Tool>
    <Tool $w={102}>
      <Pic box="2748 530 53 85">
        <path fillRule="evenodd" fill={GRAY} d="M2748 547h53v52h-53zM2756 555v15h15v-15zM2778 555v15h15v-15zM2756 577v15h15v-15zM2778 577v15h15v-15z" />
      </Pic>
    </Tool>
    <Tool $w={126}>
      <Pic box="2859 530 60 85" fill="#c0c1c3">
        <path d="M2859 549h26v8h-18v7h-8zM2919 549h-26v8h18v7h8zM2859 602h26v-8h-18v-7h-8zM2919 602h-26v-8h18v-7h8z" />
        <path d="M2859 572h15v-8l12 11.500-12 11.500v-8h-15zM2919 572h-15v-8l-12 11.500 12 11.500v-8h15z" />
      </Pic>
    </Tool>
    <Tool $w={40}><Caret color="#c0c1c3" dy={1} /></Tool>
    <Rule $w={58} />
    <Tool $w={84}>
      <Pic box="3066 530 52 85" fill={GRAY}>
        <circle cx="3073" cy="575" r="6" />
        <circle cx="3092" cy="575" r="6" />
        <circle cx="3111" cy="575" r="6" />
      </Pic>
    </Tool>
    <Collapse>
      <Pic box="3540 530 45 85">
        <path d="M3543 585l19.500-20 19.500 20" fill="none" stroke={GRAY} strokeWidth="7.500" />
      </Pic>
    </Collapse>
  </Toolbar>
);

/* ---------- formula bar ---------- */

const FormulaBar = styled.div`
  display: flex;
  height: 90px;
  flex: none;
  border-bottom: 3px solid #c0c0c0;
  overflow: hidden;
`;

const Fx = styled.div`
  width: 173px;
  height: 64px;
  margin: 11px 37px 0 0;
  padding-left: 56px;
  border-right: 3px solid #c6c6c6;
  font: italic 82px/44px "Liberation Serif", serif;
  color: #c2c4c6;
`;

const FormulaText = styled.div`
  padding-top: 15px;
  font: 48.75px/48px ${ROBOTO};
  color: #000;
  white-space: pre;
`;

const FormulaThumb = styled.div`
  width: 30px;
  height: 56px;
  margin: 15px 52px 0 auto;
  border-radius: 15px;
  background: #dadce0;
`;

/* ---------- grid ---------- */

const GridArea = styled.div`
  display: flex;
  height: 1129px;
  flex: none;
`;

const Grid = styled.div`
  width: 3586px;
  height: 1129px;
  overflow: hidden;
`;

const Row = styled.div`
  display: flex;
  height: ${(p) => p.$h}px;
`;

const HeadCell = styled.div`
  width: ${(p) => p.$w}px;
  height: 100%;
  flex: none;
  overflow: hidden;
  padding-left: ${(p) => p.$dx || 0}px;
  border-right: 4px solid #c0c0c0;
  border-bottom: 4px solid #c0c0c0;
  background: ${(p) => (p.$on ? '#e8eaed' : '#f8f9fa')};
  font: 40px/${(p) => p.$line}px ${ROBOTO};
  color: ${GRAY};
  text-align: center;
  &:last-child { border-right: 0; }
`;

const Corner = styled.div`
  width: 173px;
  height: 90px;
  flex: none;
  border-right: 15px solid #bcbcbc;
  border-bottom: 19px solid #bcbcbc;
  background: #f8f9fa;
`;

const WideLabel = styled.div`
  width: 376px;
`;

const Cell = styled.div`
  position: relative;
  display: flex;
  flex-direction: column;
  justify-content: flex-end;
  align-items: flex-start;
  width: ${(p) => p.$w}px;
  flex: none;
  z-index: ${(p) => (p.$lift ? 1 : 'auto')};
  padding: 0 0 ${(p) => p.$pb || 0}px 11px;
  border-right: 4px solid ${(p) => (p.$spill ? '#fff' : '#e2e3e3')};
  border-bottom: 4px solid #e2e3e3;
  font: ${(p) => (p.$big ? '60px/71px' : '50px/60px')} ${ARIAL};
  color: #000;
  white-space: pre;
  &:last-child { border-right: 0; }
`;

const Selection = styled.div`
  position: absolute;
  left: -4px;
  top: -4px;
  width: 1377px;
  height: 237px;
  border: 7px solid #1a73e8;
  &::after {
    content: '';
    position: absolute;
    right: -15px;
    bottom: -15px;
    width: 24px;
    height: 24px;
    background: #1a73e8;
    box-shadow: 0 0 0 3px #fff;
  }
`;

const COLS = [518, 1373, 1279, 243];

const ROWS = [
  { n: 33, h: 79, line: 79 },
  {
    n: 34,
    h: 233,
    line: 229,
    pb: 4,
    a: 'Boomer tweets',
    b: [['OUR veterans are the SOUL of our country,,,', 1196], ['Thank you for service to our country.', 972], ['Have a Blessed Veterans Day!', 818]],
  },
  {
    n: 35,
    h: 233,
    line: 229,
    pb: 4,
    on: true,
    b: [['Hi there! Who did YOU find isnpiring lately???', 1222], [' organizations,,,initiatives,,anything...', 982], ['Have a good day!', 474]],
  },
  { n: 36, h: 161, line: 155, pb: 7, b: [['WE should all be thankful that we live', 995], ['the freest nation in History,,, Have a good day!', 1235]] },
  { n: 37, h: 161, line: 155, pb: 7, spill: true, b: [['at Starbucks everybody says Happy HOlidays,,what', 1379], ['happend to MERRY CHRISTMAS??', 970]] },
  { n: 38, h: 79, line: 78 },
  { n: 39, h: 79, line: 79 },
];

const VScroll = styled.div`
  display: flex;
  flex-direction: column;
  width: 44px;
  flex: none;
  border-left: 3px solid #d9d9d9;
`;

const VHead = styled.div`
  height: 89px;
  background: #f8f8f8;
  border-bottom: 3px solid #dadce0;
`;

const VThumb = styled.div`
  width: 35px;
  height: 98px;
  margin: 42px auto 0 3px;
  border-radius: 17px;
  background: #dadce0;
`;

const VButton = styled.div`
  display: flex;
  align-items: center;
  justify-content: center;
  height: 59px;
  padding-bottom: 3px;
  margin-top: ${(p) => (p.$first ? 'auto' : 0)};
  border-top: 3px solid #d9d9d9;
  background: #f8f8f8;
`;

const HScroll = styled.div`
  display: flex;
  height: 45px;
  flex: none;
  border-top: 3px solid #d9d9d9;
`;

const HCorner = styled.div`
  width: 173px;
  border-right: 3px solid #dadce0;
  background: #f8f8f8;
`;

const HThumb = styled.div`
  width: 818px;
  height: 35px;
  margin: 4px auto 0 3px;
  border-radius: 17px;
  background: #dadce0;
`;

const HButton = styled.div`
  display: flex;
  align-items: center;
  width: ${(p) => p.$w}px;
  padding-left: ${(p) => p.$pad || 0}px;
  border-left: 3px solid #d9d9d9;
  background: #f8f8f8;
`;

/* ---------- sheet tabs ---------- */

const SheetBar = styled.div`
  display: flex;
  height: 148px;
  flex: none;
  border-top: 3px solid #e8eaed;
  background: #f1f3f4;
`;

const SheetTools = styled.div`
  display: flex;
  align-items: center;
  width: 435px;
  flex: none;
  padding: 0 0 8px 189px;
  gap: 73px;
`;

const SheetTab = styled.div`
  display: flex;
  align-items: center;
  width: ${(p) => p.$w}px;
  flex: none;
  padding: 0 0 8px ${(p) => p.$pad}px;
  gap: 35px;
  border-right: 3px solid #e6e8eb;
  font: 500 54px/70px ${ROBOTO};
  color: ${(p) => (p.$active ? '#188038' : '#80868b')};
  ${(p) =>
    p.$active &&
    css`
      background: #fff;
      border-right: 0;
      box-shadow: 0 0 8px rgba(60, 64, 67, 0.25);
      clip-path: inset(0 -10px 0 -10px);
    `}
`;

const Explore = styled.div`
  margin: 33px 77px 0 auto;
`;

const SidePanel = styled.div`
  display: flex;
  flex-direction: column;
  align-items: center;
  width: 207px;
  padding: 70px 0 82px 3px;
  gap: 139px;
`;

const PanelToggle = styled.div`
  margin-top: auto;
  padding-right: 2px;
`;

/* ---------- Windows taskbar ---------- */

const Taskbar = styled.div`
  display: flex;
  height: 100px;
  flex: none;
  background: #1c1c1c;
  color: #fff;
  font-family: ${UI};
`;

const Start = styled.div`
  display: flex;
  align-items: center;
  justify-content: center;
  width: 120px;
`;

const SearchBox = styled.div`
  display: flex;
  align-items: center;
  width: 860px;
  padding: 2px 0 0 28px;
  gap: 31px;
  border: 3px solid #bdbdbd;
  background: #f2f2f2;
  color: #2b2b2b;
  font-size: 36.5px;
`;

const TaskButton = styled.div`
  display: flex;
  flex-direction: column;
  align-items: center;
  justify-content: center;
  position: relative;
  width: ${(p) => (p.$on ? 122 : p.$w || 124)}px;
  margin: 0 ${(p) => (p.$on ? 1 : 0)}px;
  flex: none;
  background: ${(p) => (p.$on ? '#4c4c4c' : 'transparent')};
  &::after {
    content: '';
    position: absolute;
    bottom: 0;
    left: ${(p) => (p.$on ? 0 : 11)}px;
    right: ${(p) => (p.$on ? 0 : 11)}px;
    height: 5px;
    background: ${(p) => (p.$stack ? 'linear-gradient(90deg, #b0dcff 77%, #6f7d88 77%, #8eb0cc 79%)' : p.$run ? '#b0dcff' : 'transparent')};
  }
`;

const Tray = styled.div`
  display: flex;
  align-items: center;
  margin-left: auto;
`;

const Clock = styled.div`
  width: 157px;
  margin-left: 25px;
  font-size: 29px;
  line-height: 46.5px;
  text-align: center;
  padding-top: 1px;
`;

const DesktopEdge = styled.div`
  width: 3px;
  height: 100px;
  margin: 0 11px 0 5px;
  background: #6a6a6a;
`;

const Ic = ({ children }) => <Pic box="0 0 60 60">{children}</Pic>;

const TASKS = [
  {
    k: 'files',
    stack: true,
    el: (
      <Ic>
        <path d="M4 9q0-2 2-2h18l4 6v12H4z" fill="#e09b00" />
        <path d="M4 17h23l3-5h24q2 0 2 2v34q0 2-2 2H6q-2 0-2-2z" fill="#ffd766" />
        <path d="M12 34q0-4 3-4h29q3 0 3 4v17h-9V41q0-2-2-2H22q-2 0-2 2v10h-8z" fill="#3b99e0" />
      </Ic>
    ),
  },
  {
    k: 'chrome',
    on: true,
    run: true,
    el: (
      <Ic>
        <circle cx="30" cy="30" r="28" fill="#ffcd40" />
        <path d="M5.750 16A28 28 0 0 1 54.250 16H30L18 37z" fill="#dd5144" />
        <path d="M5.750 16A28 28 0 0 0 28 58L41 37H18z" fill="#1da462" />
        <path d="M54.250 16A28 28 0 0 1 28 58L42 36 41 16z" fill="#ffcd40" />
        <circle cx="30" cy="30" r="13" fill="#fff" />
        <circle cx="30" cy="30" r="10.500" fill="#4c8bf5" />
      </Ic>
    ),
  },
  {
    k: 'store',
    el: (
      <Ic>
        <path d="M16 18V4q0-3 3-3h23q3 0 3 3v14" fill="none" stroke="#e9e9e9" strokeWidth="4" />
        <path d="M0 16h60v44H0z" fill="#f3f3f3" />
        <path d="M19 29h10v10H19z" fill="#f25022" />
        <path d="M31 29h10v10H31z" fill="#7fba00" />
        <path d="M19 41h10v10H19z" fill="#00a4ef" />
        <path d="M31 41h10v10H31z" fill="#ffb900" />
      </Ic>
    ),
  },
  {
    k: 'edge',
    el: (
      <Ic>
        <path d="M1 26C4 9 16 0 31 0c17 0 29 11 29 25 0 9-6 15-14 15-7 0-10-3-8-7 3-7-3-17-14-19C14 13 4 17 1 26z" fill="#35c1d6" />
        <path d="M31 0c17 0 29 11 29 25 0 9-6 15-14 15-7 0-10-3-8-7 2-5 2-14-7-19 10-2 5-12 0-14z" fill="#57d66a" opacity=".75" />
        <path d="M0 32C0 20 9 13 20 14c11 1 17 9 17 15-4-5-14-3-14 7 0 8 6 21 20 21-6 3-10 3-14 3C12 60 0 48 0 32z" fill="#0f7fd6" />
        <path d="M23 34c-3 15 12 22 32 10-4 8-11 13-19 15C22 57 16 44 23 34z" fill="#10529c" />
      </Ic>
    ),
  },
  {
    k: 'r',
    run: true,
    el: (
      <Ic>
        <defs>
          <radialGradient id="ball" cx=".5" cy=".85" r=".8">
            <stop offset="0" stopColor="#74d3fb" />
            <stop offset=".5" stopColor="#2475d3" />
            <stop offset="1" stopColor="#0b3fae" />
          </radialGradient>
          <linearGradient id="gloss" x1="0" y1="0" x2="0" y2="1">
            <stop offset="0" stopColor="#fff" />
            <stop offset="1" stopColor="#fff" stopOpacity=".05" />
          </linearGradient>
        </defs>
        <circle cx="30" cy="30" r="29.500" fill="url(#ball)" />
        <ellipse cx="30" cy="15" rx="19" ry="14" fill="url(#gloss)" />
        <text x="31" y="41" fontFamily="Liberation Serif, serif" fontSize="36" fill="#fff" textAnchor="middle">R</text>
      </Ic>
    ),
  },
  {
    k: 'discord',
    run: true,
    el: (
      <Ic>
        <path d="M12 6h36q6 0 6 6v45L44 48l1 3H12q-6 0-6-6V12q0-6 6-6z" fill="#7688d0" />
        <FaDiscord x="11" y="11" size={38} color="#fff" />
      </Ic>
    ),
  },
  {
    k: 'word',
    run: true,
    el: (
      <Ic>
        <path d="M14 3h45v14H14z" fill="#41a5ee" />
        <path d="M14 17h45v13H14z" fill="#2b7cd3" />
        <path d="M14 30h45v13H14z" fill="#185abd" />
        <path d="M14 43h45v14H14z" fill="#103f91" />
        <rect x="0" y="15" width="30" height="30" rx="2" fill="#185abd" />
        <text x="15" y="38.500" fontFamily="Open Sans, sans-serif" fontWeight="700" fontSize="22" fill="#fff" textAnchor="middle">W</text>
      </Ic>
    ),
  },
  {
    k: 'element',
    run: true,
    el: (
      <Ic>
        <rect width="60" height="60" rx="13" fill="#0dbd8b" />
        <g fill="none" stroke="#fff" strokeWidth="4.500" strokeLinecap="round">
          <path d="M27 12q13 0 14 13" />
          <path d="M48 27q0 13-13 14" />
          <path d="M33 48q-13 0-14-13" />
          <path d="M12 33q0-13 13-14" />
        </g>
      </Ic>
    ),
  },
  {
    k: 'tex',
    run: true,
    el: (
      <Ic>
        <defs>
          <linearGradient id="night" x1="0" y1="0" x2="1" y2="1">
            <stop offset=".25" stopColor="#15142a" />
            <stop offset="1" stopColor="#4030e0" />
          </linearGradient>
        </defs>
        <path d="M6 4h51v51H6z" fill="url(#night)" stroke="#5b1a86" strokeWidth="2" />
        <path d="M8 54L18 22l8 6-6 26z" fill="#5a1fa8" />
        <path d="M14 14l10 8-6 6z" fill="#d9f23a" />
        <text x="17" y="46" fontFamily="Liberation Serif, serif" fontSize="23" fill="#f2d21b">T</text>
        <text x="27" y="54" fontFamily="Liberation Serif, serif" fontSize="23" fill="#f2d21b">E</text>
        <text x="39" y="46" fontFamily="Liberation Serif, serif" fontSize="23" fill="#f2d21b">X</text>
      </Ic>
    ),
  },
  {
    k: 'slack',
    run: true,
    el: (
      <Ic>
        <circle cx="30" cy="30" r="30" fill="#f7f7f7" />
        <g strokeLinecap="round" strokeWidth="8.500">
          <path d="M14 24h10M25 13.500v0" stroke="#36c5f0" />
          <path d="M35.500 14v10M46.500 24.500v0" stroke="#2eb67d" />
          <path d="M36 35.500h10M36 46.500v0" stroke="#ecb22e" />
          <path d="M25 36v10M14 35.500v0" stroke="#e01e5a" />
        </g>
      </Ic>
    ),
  },
  {
    k: 'npp',
    run: true,
    el: (
      <Ic>
        <path d="M3 6h36l5 48-41 4z" fill="#f6f8ea" />
        <path d="M3 26q18-6 38 4l3 24-41 3z" fill="#8fd016" />
        <path d="M3 44l40-6 1 15-41 4z" fill="#3b8d12" />
        <path d="M8 30q5-12 16-8 4 3 0 8l-14 6z" fill="#4aa51f" stroke="#1c4c0b" strokeWidth="1.500" />
        <circle cx="21" cy="21" r="3.500" fill="#fff" stroke="#222" />
        <text x="12" y="42" fontFamily="Liberation Serif, serif" fontStyle="italic" fontSize="9" fill="#223">Notepad</text>
        <path d="M55 2L42 38l-1 6 4-5L58 4z" fill="#e8a81c" />
        <path d="M3 7h36" stroke="#555" strokeWidth="3" strokeDasharray="2 2" />
      </Ic>
    ),
  },
  {
    k: 'foxit',
    run: true,
    el: (
      <Ic>
        <path d="M0 0h46v14h14v46H0z" fill="#f58220" />
        <path d="M48 0l12 12H48z" fill="#f58220" />
        <path d="M42 15q-4-3-11-2-13 3-14 16 1 11 12 12 12-1 13-12-1-8-9-9-6 1-5 8" fill="none" stroke="#fff" strokeWidth="6" />
        <text x="31" y="55" fontFamily="Roboto, sans-serif" fontWeight="700" fontSize="13" fill="#fff" textAnchor="middle">PDF</text>
      </Ic>
    ),
  },
  {
    k: 'paintnet',
    run: true,
    el: (
      <Ic>
        <path d="M1 1h45v57H1z" fill="#f2f2f2" />
        <path d="M4 4h39v43H4z" fill="#3170c8" />
        <path d="M4 4h12l-8 8H4z" fill="#1a4b9c" />
        <path d="M8 20q8-10 18-12l-4 9-12 12zM24 22l14-10 4 6-12 8z" fill="#dbe9f8" />
        <path d="M4 40h39v7H4z" fill="#0b1f5c" />
        <path d="M4 36q20-8 39 0v5H4z" fill="#d9e9fa" />
        <path d="M55 17L24 43l-3 6 6-3z" fill="#c21f24" stroke="#7c1013" />
        <path d="M24 42l-10 12q8 1 13-8z" fill="#8c99a8" />
      </Ic>
    ),
  },
  {
    k: 'github',
    run: true,
    el: (
      <Ic>
        <circle cx="30" cy="30" r="29" fill="#f0f0f0" />
        <SiGithub size={55} x="2.500" y="2.500" color="#6f3a9c" />
      </Ic>
    ),
  },
];

const Bottom = () => (
  <Taskbar>
    <Start>
      <Pic box="0 0 40 40">
        <path d="M0 5.500l16.500-2.300V19H0zM18 3L40 0v19H18zM0 20.500h16.500V36.500L0 34.500zM18 20.500h22V40l-22-3.300z" fill="#fff" />
      </Pic>
    </Start>
    <SearchBox>
      <Pic box="0 0 50 50">
        <circle cx="32" cy="15" r="14.500" fill="none" stroke="#111" strokeWidth="3" />
        <path d="M22 26L2 46" stroke="#111" strokeWidth="3.200" />
      </Pic>
      <Fit width={328}>Search for anything</Fit>
    </SearchBox>
    <TaskButton $w={120}>
      <Pic box="0 0 42 42"><circle cx="21" cy="21" r="17.500" fill="none" stroke="#fff" strokeWidth="4.500" /></Pic>
    </TaskButton>
    <TaskButton $w={124}>
      <Pic box="0 0 40 40" fill="none" stroke="#fff" strokeWidth="2.500">
        <path d="M1.200 1v6.500h24V1M1.200 13h24v15h-24zM1.200 39v-6.500h24V39M37.500 1v9M37.500 21v18" />
        <circle cx="37.500" cy="15.500" r="2.800" fill="#fff" stroke="none" />
      </Pic>
    </TaskButton>
    {TASKS.map((t) => (
      <TaskButton key={t.k} $on={t.on} $run={t.run} $stack={t.stack}>{t.el}</TaskButton>
    ))}
    <Tray>
      <Pic box="3364 2080 276 60" fill="none" stroke="#fff" strokeWidth="2.500">
        <path d="M3365 2116l14.500-15 14.500 15" />
        <path d="M3443 2101h33v20h-33zM3479 2107v8" />
        <path d="M3447 2105h7v12h-7z" fill="#fff" stroke="none" />
        <path d="M3520 2104h5l9-8v27l-9-8h-5z" />
        <path d="M3540 2103q5 6 0 13M3545 2098q9 12 0 23" />
        <path d="M3551 2093q13 17 0 34" stroke="#777" />
        <path d="M3610 2092l9 6.500-9 6.500-10-6.500zM3630 2092l10 6.500-10 6.500-9-6.500zM3630 2105l10 6.500-10 6.500-9-6.500zM3624 2118l6 2-6 5z" fill="#fff" stroke="none" />
        <rect x="3599" y="2107" width="23" height="23" rx="5" fill="#d70a26" stroke="none" />
        <text x="3610.500" y="2125.500" fontFamily="Open Sans, sans-serif" fontWeight="600" fontSize="19" fill="#fff" stroke="none" textAnchor="middle">1</text>
      </Pic>
      <Clock>
        <Fit width={106}>1:29 PM</Fit>
        <Fit width={151}>11/24/2020</Fit>
      </Clock>
      <DesktopEdge />
    </Tray>
  </Taskbar>
);

/* ---------- page ---------- */

export default function App() {
  return (
    <Screen>
      <GlobalStyle />
      <TabStrip>
        {TABS.map((t) => (
          <BrowserTab key={t.text} $active={t.active}>
            {t.icon}
            <TabTitle $fade={t.fade}><Fit width={t.w}>{t.text}</Fit></TabTitle>
            <CloseX />
            {!t.active && !t.last && <TabRule />}
          </BrowserTab>
        ))}
        <NewTab>
          <Pic box="0 0 31 31"><path d="M15.500 0v31M0 15.500h31" stroke="#3c4043" strokeWidth="4.500" /></Pic>
        </NewTab>
        <WindowButtons>
          <Pic box="0 0 26 26"><path d="M0 13h26" stroke="#000" strokeWidth="2.500" /></Pic>
          <Pic box="0 0 26 26" fill="none" stroke="#000" strokeWidth="2.500">
            <path d="M1.500 6.500h18v18h-18zM6.500 6V1.500h18v18H20" />
          </Pic>
          <Pic box="0 0 26 26"><path d="M.5.5l25 25M25.500.5l-25 25" stroke="#000" strokeWidth="2.500" /></Pic>
        </WindowButtons>
      </TabStrip>
      <AddressBar />
      <BookmarkBar>
        <AppsLink>
          <Pic box="0 0 33 35">
            {APP_COLORS.map((c, i) => (
              <rect key={i} x={(i % 3) * 12} y={Math.floor(i / 3) * 12.5} width="8.500" height="8.500" fill={c} />
            ))}
          </Pic>
          <Fit width={67}>Apps</Fit>
        </AppsLink>
        {BOOKMARKS.map((b) => (
          <Bookmark key={b.text}>
            {b.icon}
            <Fit width={b.w}>{b.text}</Fit>
          </Bookmark>
        ))}
        <More>»</More>
      </BookmarkBar>
      <Header />
      <Work>
        <Main>
          <Tools />
          <FormulaBar>
            <Fx>fx</Fx>
            <FormulaText>{'Hi there! Who did YOU find isnpiring lately???\n organizations,,,initiatives,,anything...'}</FormulaText>
            <FormulaThumb />
          </FormulaBar>
          <GridArea>
            <Grid>
              <Row $h={90}>
                <Corner />
                <HeadCell $w={COLS[0]} $line={85} $dx={4}>A</HeadCell>
                <HeadCell $w={COLS[1]} $line={85} $dx={4} $on>B</HeadCell>
                <HeadCell $w={COLS[2]} $line={85} $dx={4}>C</HeadCell>
                <HeadCell $w={COLS[3]} $line={85} $dx={2}><WideLabel>D</WideLabel></HeadCell>
              </Row>
              {ROWS.map((r) => (
                <Row key={r.n} $h={r.h}>
                  <HeadCell $w={173} $line={r.line} $on={r.on}>{r.n}</HeadCell>
                  <Cell $w={COLS[0]} $pb={2}>{r.a}</Cell>
                  <Cell $w={COLS[1]} $big $pb={r.pb} $spill={r.spill} $lift={r.on || r.spill}>
                    {r.b && r.b.map(([line, w]) => <Fit key={line} width={w}>{line}</Fit>)}
                    {r.on && <Selection />}
                  </Cell>
                  <Cell $w={COLS[2]} />
                  <Cell $w={COLS[3]} />
                </Row>
              ))}
              <Row $h={79}>
                <HeadCell $w={173} $line={79} />
                <Cell $w={COLS[0]} />
                <Cell $w={COLS[1]} />
                <Cell $w={COLS[2]} />
                <Cell $w={COLS[3]} />
              </Row>
            </Grid>
            <VScroll>
              <VHead />
              <VThumb />
              <VButton $first><Pic box="0 0 22 14"><path d="M11 0l11 14H0z" fill="#999" /></Pic></VButton>
              <VButton><Pic box="0 0 22 14"><path d="M11 14L0 0h22z" fill="#999" /></Pic></VButton>
            </VScroll>
          </GridArea>
          <HScroll>
            <HCorner />
            <HThumb />
            <HButton $w={60} $pad={18}><Pic box="0 0 14 22"><path d="M0 11L14 0v22z" fill="#999" /></Pic></HButton>
            <HButton $w={59} $pad={22}><Pic box="0 0 14 22"><path d="M14 11L0 0v22z" fill="#999" /></Pic></HButton>
            <HButton $w={44} />
          </HScroll>
          <SheetBar>
            <SheetTools>
              <Pic box="0 0 41 41"><path d="M20.500 0v41M0 20.500h41" stroke="#6b6b6b" strokeWidth="8" /></Pic>
              <Pic box="0 0 47 44"><path d="M0 1h47v8H0zM0 12.500h47v8H0zM0 24h47v8H0zM0 35.500h47v8H0z" fill="#6b6b6b" /></Pic>
            </SheetTools>
            <SheetTab $w={360} $pad={61} $active><Fit width={172}>Sheet1</Fit><Caret color="#188038" dy={1} /></SheetTab>
            <SheetTab $w={366} $pad={60}><Fit width={179}>Sheet2</Fit><Caret color="#80868b" dy={1} /></SheetTab>
            <SheetTab $w={368} $pad={60}><Fit width={179}>Sheet3</Fit><Caret color="#80868b" dy={1} /></SheetTab>
            <Explore>
              <Pic box="0 0 68 80">
                <path d="M8 0h52q8 0 8 8v52q0 8-8 8H45L34 80 23 68H8q-8 0-8-8V8q0-8 8-8z" fill="#6d6e70" />
                <path d="M34 12l6.500 15.500L56 34l-15.500 6.500L34 56l-6.500-15.500L12 34l15.500-6.500z" fill="#f1f3f4" />
              </Pic>
            </Explore>
          </SheetBar>
        </Main>
        <SidePanel>
          <Calendar day="31" size={71} />
          <Pic box="0 0 72 72">
            <rect width="72" height="72" rx="7" fill="#fbbc04" />
            <circle cx="36" cy="32" r="15.500" fill="#fff" />
            <path d="M28 40h16v7H28zM28 50h16v6H28z" fill="#fff" />
          </Pic>
          <Pic box="0 0 71 71">
            <circle cx="35.500" cy="35.500" r="35.500" fill="#4285f4" />
            <circle cx="18" cy="37" r="8" fill="#fbbc04" />
            <path d="M28 50L52 25" stroke="#fff" strokeWidth="13" strokeLinecap="round" />
          </Pic>
          <PanelToggle>
            <Pic box="0 0 26 40"><path d="M3.500 3l17 17-17 17" fill="none" stroke={GRAY} strokeWidth="6" /></Pic>
          </PanelToggle>
        </SidePanel>
      </Work>
      <Bottom />
    </Screen>
  );
}
